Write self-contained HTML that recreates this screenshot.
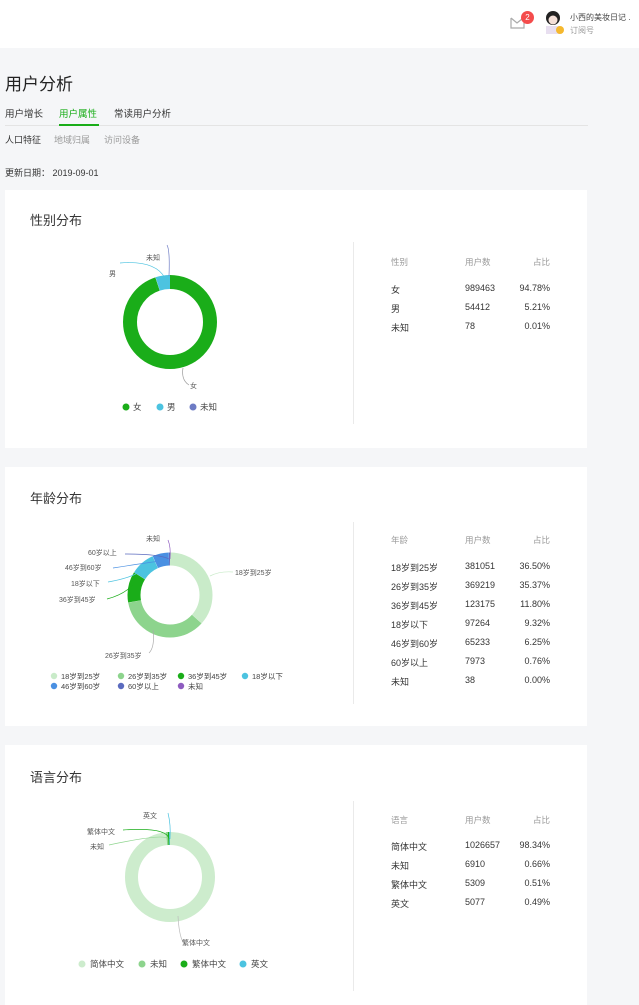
<!DOCTYPE html>
<html><head><meta charset="utf-8"><style>
*{margin:0;padding:0;box-sizing:border-box}
body{width:639px;height:989px;overflow:hidden;background:#f5f6f8;font-family:"Liberation Sans","Noto Sans CJK SC",sans-serif;color:#353535;position:relative}
.a{position:absolute;white-space:nowrap}
.hdr{position:absolute;left:0;top:0;width:639px;height:48px;background:#fff}
.card{position:absolute;left:5px;width:582px;background:#fff}
.vl{position:absolute;left:348px;width:1px;background:#eaeaea}
.t{font-size:9px;color:#353535}
.th{font-size:8.5px;color:#9a9a9a}
.ct{font-size:13px;color:#353535}
.lab{font-size:7px;fill:#555;font-family:"Liberation Sans","Noto Sans CJK SC",sans-serif}
</style></head><body>
<div class="hdr">
 <svg class="a" style="left:509px;top:15px" width="18" height="16"><path d="M2 3v10h13v-5M2 3l6 5 5-4" fill="none" stroke="#aaa" stroke-width="1.2"/></svg>
 <div class="a" style="left:521px;top:11px;width:13px;height:13px;border-radius:7px;background:#f44c4c;color:#fff;font-size:8px;text-align:center;line-height:13px">2</div>
 <svg class="a" style="left:542px;top:9px" width="24" height="26"><circle cx="11" cy="9" r="7" fill="#222"/><circle cx="11" cy="11" r="4.5" fill="#f4e0d8"/><rect x="4" y="17" width="14" height="8" fill="#e8dff0"/><circle cx="18" cy="21" r="4" fill="#f5b82e"/></svg>
 <div class="a" style="left:570px;top:12px;font-size:8px;color:#444">小西的美妆日记 .</div>
 <div class="a" style="left:570px;top:25px;font-size:8px;color:#999">订阅号</div>
</div>
<div class="a" style="left:5px;top:70px;font-size:17px;color:#222">用户分析</div>
<div class="a" style="left:5px;top:106px;font-size:9.5px;color:#353535">用户增长</div>
<div class="a" style="left:59px;top:106px;font-size:9.5px;color:#1aad19">用户属性</div>
<div class="a" style="left:114px;top:106px;font-size:9.5px;color:#353535">常读用户分析</div>
<div class="a" style="left:5px;top:125px;width:583px;height:1px;background:#e4e4e4"></div>
<div class="a" style="left:59px;top:124px;width:40px;height:2px;background:#1aad19"></div>
<div class="a" style="left:5px;top:133px;font-size:9px;color:#353535">人口特征</div>
<div class="a" style="left:54px;top:133px;font-size:9px;color:#9a9a9a">地域归属</div>
<div class="a" style="left:104px;top:133px;font-size:9px;color:#9a9a9a">访问设备</div>
<div class="a" style="left:5px;top:166px;font-size:9px;color:#353535">更新日期： 2019-09-01</div>

<!-- card 1 -->
<div class="card" style="top:190px;height:258px">
 <div class="a ct" style="left:25px;top:20px">性别分布</div>
 <div class="vl" style="top:52px;height:182px"></div>
 <svg class="a" style="left:0;top:0" width="340" height="258">
  <g transform="translate(165,132) rotate(-90)" fill="none" stroke-width="14">
   <circle r="40" stroke="#1aad19" stroke-dasharray="238.2 300"/>
   <circle r="40" stroke="#4cc3e0" stroke-dasharray="12.6 300" stroke-dashoffset="-238.4"/>
  </g>
  <path d="M160 88 Q150 70 115 73" stroke="#4cc3e0" fill="none" stroke-width="0.7"/>
  <path d="M164 86 Q165 60 162 55" stroke="#6d7bc4" fill="none" stroke-width="0.7"/>
  <path d="M178 178 Q176 190 184 195" stroke="#999" fill="none" stroke-width="0.7"/>
  <text class="lab" x="104" y="86">男</text>
  <text class="lab" x="141" y="70">未知</text>
  <text class="lab" x="185" y="198">女</text>
  <circle cx="121" cy="217" r="3.5" fill="#1aad19"/><text x="128" y="220" font-size="8.5" fill="#444">女</text>
  <circle cx="155" cy="217" r="3.5" fill="#4cc3e0"/><text x="162" y="220" font-size="8.5" fill="#444">男</text>
  <circle cx="188" cy="217" r="3.5" fill="#6d7bc4"/><text x="195" y="220" font-size="8.5" fill="#444">未知</text>
 </svg>
 <div class="a th" style="left:386px;top:66px">性别</div>
 <div class="a th" style="left:460px;top:66px">用户数</div>
 <div class="a th" style="left:528px;top:66px">占比</div>
 <div class="a t" style="left:386px;top:93px">女</div><div class="a t" style="left:460px;top:93px">989463</div><div class="a t" style="left:514px;top:93px;width:31px;text-align:right">94.78%</div>
 <div class="a t" style="left:386px;top:112px">男</div><div class="a t" style="left:460px;top:112px">54412</div><div class="a t" style="left:514px;top:112px;width:31px;text-align:right">5.21%</div>
 <div class="a t" style="left:386px;top:131px">未知</div><div class="a t" style="left:460px;top:131px">78</div><div class="a t" style="left:514px;top:131px;width:31px;text-align:right">0.01%</div>
</div>

<!-- card 2 -->
<div class="card" style="top:467px;height:259px">
 <div class="a ct" style="left:25px;top:21px">年龄分布</div>
 <div class="vl" style="top:55px;height:182px"></div>
 <svg class="a" style="left:0;top:0" width="340" height="259">
  <g transform="translate(165,128) rotate(-90)" fill="none" stroke-width="13">
   <circle r="36" stroke="#c9ebc9" stroke-dasharray="82.6 300"/>
   <circle r="36" stroke="#8dd48d" stroke-dasharray="80 300" stroke-dashoffset="-82.8"/>
   <circle r="36" stroke="#1aad19" stroke-dasharray="26.5 300" stroke-dashoffset="-163"/>
   <circle r="36" stroke="#4cc3e0" stroke-dasharray="20.9 300" stroke-dashoffset="-189.7"/>
   <circle r="36" stroke="#4a90e2" stroke-dasharray="13.9 300" stroke-dashoffset="-210.8"/>
   <circle r="36" stroke="#5b6bbf" stroke-dasharray="1.5 300" stroke-dashoffset="-224.8"/>
  </g>
  <g fill="none" stroke-width="0.7">
  <path d="M205 109 Q215 104 228 105" stroke="#c9ebc9"/>
  <path d="M148 163 Q150 180 144 186" stroke="#aaa"/>
  <path d="M128 118 Q118 128 102 132" stroke="#1aad19"/>
  <path d="M140 100 Q132 110 103 115" stroke="#4cc3e0"/>
  <path d="M155 94 Q140 96 108 101" stroke="#4a90e2"/>
  <path d="M164 92 Q155 87 120 87" stroke="#5b6bbf"/>
  <path d="M165 92 Q166 80 163 73" stroke="#8e5cc0"/>
  </g>
  <text class="lab" x="230" y="108">18岁到25岁</text>
  <text class="lab" x="100" y="191">26岁到35岁</text>
  <text class="lab" x="54" y="135">36岁到45岁</text>
  <text class="lab" x="66" y="119">18岁以下</text>
  <text class="lab" x="60" y="103">46岁到60岁</text>
  <text class="lab" x="83" y="88">60岁以上</text>
  <text class="lab" x="141" y="74">未知</text>
  <g font-size="7.5" fill="#444">
  <circle cx="49" cy="209" r="3.2" fill="#c9ebc9"/><text x="56" y="212">18岁到25岁</text>
  <circle cx="116" cy="209" r="3.2" fill="#8dd48d"/><text x="123" y="212">26岁到35岁</text>
  <circle cx="176" cy="209" r="3.2" fill="#1aad19"/><text x="183" y="212">36岁到45岁</text>
  <circle cx="240" cy="209" r="3.2" fill="#4cc3e0"/><text x="247" y="212">18岁以下</text>
  <circle cx="49" cy="219" r="3.2" fill="#4a90e2"/><text x="56" y="222">46岁到60岁</text>
  <circle cx="116" cy="219" r="3.2" fill="#5b6bbf"/><text x="123" y="222">60岁以上</text>
  <circle cx="176" cy="219" r="3.2" fill="#8e5cc0"/><text x="183" y="222">未知</text>
  </g>
 </svg>
 <div class="a th" style="left:386px;top:67px">年龄</div>
 <div class="a th" style="left:460px;top:67px">用户数</div>
 <div class="a th" style="left:528px;top:67px">占比</div>
 <div class="a t" style="left:386px;top:94px">18岁到25岁</div><div class="a t" style="left:460px;top:94px">381051</div><div class="a t" style="left:514px;top:94px;width:31px;text-align:right">36.50%</div>
 <div class="a t" style="left:386px;top:113px">26岁到35岁</div><div class="a t" style="left:460px;top:113px">369219</div><div class="a t" style="left:514px;top:113px;width:31px;text-align:right">35.37%</div>
 <div class="a t" style="left:386px;top:132px">36岁到45岁</div><div class="a t" style="left:460px;top:132px">123175</div><div class="a t" style="left:514px;top:132px;width:31px;text-align:right">11.80%</div>
 <div class="a t" style="left:386px;top:151px">18岁以下</div><div class="a t" style="left:460px;top:151px">97264</div><div class="a t" style="left:514px;top:151px;width:31px;text-align:right">9.32%</div>
 <div class="a t" style="left:386px;top:170px">46岁到60岁</div><div class="a t" style="left:460px;top:170px">65233</div><div class="a t" style="left:514px;top:170px;width:31px;text-align:right">6.25%</div>
 <div class="a t" style="left:386px;top:189px">60岁以上</div><div class="a t" style="left:460px;top:189px">7973</div><div class="a t" style="left:514px;top:189px;width:31px;text-align:right">0.76%</div>
 <div class="a t" style="left:386px;top:208px">未知</div><div class="a t" style="left:460px;top:208px">38</div><div class="a t" style="left:514px;top:208px;width:31px;text-align:right">0.00%</div>
</div>

<!-- card 3 -->
<div class="card" style="top:745px;height:260px">
 <div class="a ct" style="left:25px;top:22px">语言分布</div>
 <div class="vl" style="top:56px;height:190px"></div>
 <svg class="a" style="left:0;top:0" width="340" height="260">
  <g transform="translate(165,132) rotate(-90)" fill="none" stroke-width="13">
   <circle r="38.5" stroke="#cdeccd" stroke-dasharray="237.9 300"/>
   <circle r="38.5" stroke="#8dd48d" stroke-dasharray="1.6 300" stroke-dashoffset="-238"/>
   <circle r="38.5" stroke="#1aad19" stroke-dasharray="1.2 300" stroke-dashoffset="-239.6"/>
   <circle r="38.5" stroke="#4cc3e0" stroke-dasharray="1.2 300" stroke-dashoffset="-240.8"/>
  </g>
  <g fill="none" stroke-width="0.7">
  <path d="M163 94 Q160 88 104 100" stroke="#8dd48d"/>
  <path d="M164 94 Q162 82 118 85" stroke="#1aad19"/>
  <path d="M165 94 Q166 80 163 68" stroke="#4cc3e0"/>
  <path d="M173 171 Q174 190 178 197" stroke="#bbb"/>
  </g>
  <text class="lab" x="138" y="73">英文</text>
  <text class="lab" x="82" y="89">繁体中文</text>
  <text class="lab" x="85" y="104">未知</text>
  <text class="lab" x="177" y="200">繁体中文</text>
  <g font-size="8.5" fill="#444">
  <circle cx="77" cy="219" r="3.5" fill="#cdeccd"/><text x="85" y="222">简体中文</text>
  <circle cx="137" cy="219" r="3.5" fill="#8dd48d"/><text x="145" y="222">未知</text>
  <circle cx="179" cy="219" r="3.5" fill="#1aad19"/><text x="187" y="222">繁体中文</text>
  <circle cx="238" cy="219" r="3.5" fill="#4cc3e0"/><text x="246" y="222">英文</text>
  </g>
 </svg>
 <div class="a th" style="left:386px;top:69px">语言</div>
 <div class="a th" style="left:460px;top:69px">用户数</div>
 <div class="a th" style="left:528px;top:69px">占比</div>
 <div class="a t" style="left:386px;top:95px">简体中文</div><div class="a t" style="left:460px;top:95px">1026657</div><div class="a t" style="left:514px;top:95px;width:31px;text-align:right">98.34%</div>
 <div class="a t" style="left:386px;top:114px">未知</div><div class="a t" style="left:460px;top:114px">6910</div><div class="a t" style="left:514px;top:114px;width:31px;text-align:right">0.66%</div>
 <div class="a t" style="left:386px;top:133px">繁体中文</div><div class="a t" style="left:460px;top:133px">5309</div><div class="a t" style="left:514px;top:133px;width:31px;text-align:right">0.51%</div>
 <div class="a t" style="left:386px;top:152px">英文</div><div class="a t" style="left:460px;top:152px">5077</div><div class="a t" style="left:514px;top:152px;width:31px;text-align:right">0.49%</div>
</div>
</body></html>
